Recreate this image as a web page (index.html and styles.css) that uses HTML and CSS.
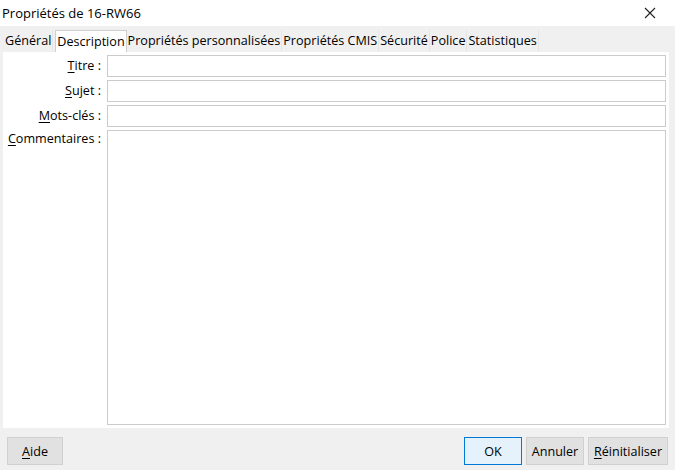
FILE: index.html
```html
<!DOCTYPE html>
<html lang="fr">
<head>
<meta charset="utf-8">
<title>Propriétés de 16-RW66</title>
<link rel="stylesheet" href="styles.css">
</head>
<body>
<div class="dialog">
  <div class="titlebar">
    <span class="title">Propriétés de 16-RW66</span>
    <svg class="close" width="12" height="12" viewBox="0 0 12 12"><path d="M1 1L11 11M11 1L1 11" stroke="#222" stroke-width="1.1" fill="none"/></svg>
  </div>
  <div class="tabs">
    <span class="tab">Général</span>
    <span class="tab active">Description</span>
    <span class="tab">Propriétés personnalisées</span>
    <span class="tab">Propriétés CMIS</span>
    <span class="tab">Sécurité</span>
    <span class="tab">Police</span>
    <span class="tab">Statistiques</span>
  </div>
  <div class="panel">
    <div class="form">
      <label class="lbl"><u>T</u>itre :</label><div class="field"></div>
      <label class="lbl"><u>S</u>ujet :</label><div class="field"></div>
      <label class="lbl"><u>M</u>ots-clés :</label><div class="field"></div>
      <label class="lbl top"><u>C</u>ommentaires :</label><div class="field area"></div>
    </div>
  </div>
  <div class="buttons">
    <button class="btn aide"><u>A</u>ide</button>
    <span class="spacer"></span>
    <button class="btn ok default">OK</button>
    <button class="btn ann">Annuler</button>
    <button class="btn reset"><u>R</u>éinitialiser</button>
  </div>
</div>
</body>
</html>
```
FILE: styles.css
```css
* { box-sizing: border-box; }
html, body { margin: 0; padding: 0; }
body {
  width: 675px; height: 470px; overflow: hidden;
  background: #f0f0f0;
  font-family: "Open Sans", "Noto Sans", sans-serif;
  font-size: 12.6px;
  color: #000;
}
.dialog { display: flex; flex-direction: column; height: 470px; }
.titlebar {
  height: 26px; background: #fff;
  display: flex; align-items: center; justify-content: space-between;
  padding: 0 19px 0 2px;
}
.title { font-size: 13px; }
.tabs {
  display: flex; align-items: stretch;
  height: 22px; margin-top: 4px; padding-left: 4px;
}
.tab {
  padding: 0 1px; line-height: 22px;
  border-right: 1px solid #e6e6e6;
  white-space: nowrap;
}
.tab.active {
  background: #fff; border: 1px solid #cfcfcf; border-bottom: none;
  padding: 0 1px; line-height: 21px; margin-left: 2px;
}
.panel {
  background: #fff; margin: 0 6px 0 3px; height: 376px;
  padding: 3px 3px 3px 3px;
}
.form {
  display: grid; grid-template-columns: 98px 1fr;
  grid-template-rows: 22px 22px 22px 1fr;
  column-gap: 3px; row-gap: 3px; height: 100%;
}
.lbl { text-align: right; line-height: 22px; white-space: nowrap; padding-right: 3px; }
.lbl.top { line-height: 18px; }
.field { border: 1px solid #cbcbcb; background: #fff; }
.buttons {
  display: flex; align-items: center; gap: 4px;
  padding: 9px 7px 0 7px;
}
.spacer { flex: 1; }
.btn {
  font: inherit; font-size: 12.6px; color: #000;
  height: 28px; background: #e1e1e1; border: 1px solid #d0d0d0;
  padding: 0; margin: 0;
}
.btn.default { border: 1px solid #0078d7; background: #e5f1fb; }
.aide { width: 56px; }
.ok { width: 58px; }
.ann { width: 58px; }
.reset { width: 80px; }
u { text-decoration-thickness: 1px; text-underline-offset: 2px; }
```
